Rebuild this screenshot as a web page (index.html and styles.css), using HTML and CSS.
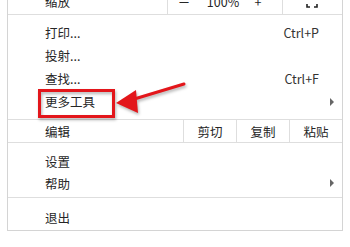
FILE: index.html
```html
<!DOCTYPE html>
<html lang="zh-CN">
<head>
    <meta charset="UTF-8">
    <title>菜单</title>
    <link rel="stylesheet" href="styles.css">
</head>
<body>
    <div class="menu">
        <div class="zoom-row">
            <span class="label">缩放</span>
            <div class="zoom-ctrl">
                <span>－</span>
                <span>100%</span>
                <span>+</span>
            </div>
            <div class="fullscreen">
                <svg width="12" height="12" viewBox="0 0 12 12">
                    <path d="M1 4V1h3M8 1h3v3M11 8v3H8M4 11H1V8" fill="none" stroke="#222" stroke-width="1.6"/>
                </svg>
            </div>
        </div>

        <div class="section first">
            <div class="item"><span class="label">打印...</span><span class="key">Ctrl+P</span><span class="sub"></span></div>
            <div class="item"><span class="label">投射...</span><span class="key"></span><span class="sub"></span></div>
            <div class="item"><span class="label">查找...</span><span class="key">Ctrl+F</span><span class="sub"></span></div>
            <div class="item"><span class="label">更多工具</span><span class="key"></span><span class="sub"><i class="arrow"></i></span></div>
        </div>

        <div class="edit-row">
            <span class="label">编辑</span>
            <span class="cell">剪切</span>
            <span class="cell">复制</span>
            <span class="cell">粘贴</span>
        </div>

        <div class="section second">
            <div class="item"><span class="label">设置</span><span class="key"></span><span class="sub"></span></div>
            <div class="item"><span class="label">帮助</span><span class="key"></span><span class="sub"><i class="arrow"></i></span></div>
        </div>

        <div class="section last">
            <div class="item"><span class="label">退出</span><span class="key"></span><span class="sub"></span></div>
        </div>
    </div>

    <!-- annotation drawn over the menu -->
    <svg class="annotation" width="350" height="247" viewBox="0 0 350 247">
        <rect x="39.5" y="90.5" width="74" height="26" fill="none" stroke="#e3161b" stroke-width="3"/>
        <line x1="131" y1="100" x2="184" y2="84" stroke="#e3161b" stroke-width="3" stroke-linecap="round"/>
        <polygon points="116,103 136,90 138,113" fill="#e3161b"/>
    </svg>
</body>
</html>
```

FILE: styles.css
```css
* {
    margin: 0;
    padding: 0;
    box-sizing: border-box;
}

body {
    background: #fff;
    font-family: "Noto Sans CJK SC", "Liberation Sans", sans-serif;
    font-size: 12.5px;
    color: #262626;
    width: 350px;
    height: 247px;
    overflow: hidden;
    position: relative;
}

.menu {
    width: 336px;
    margin: -11px 0 0 7px;
    border: 1px solid #d4d4d4;
    border-top: none;
    background: #fff;
}

.label {
    flex: 1;
    padding-left: 37px;
}

/* zoom row */
.zoom-row {
    display: flex;
    height: 26px;
    align-items: stretch;
    border-bottom: 1px solid #dedede;
}

.zoom-row .label {
    display: flex;
    align-items: center;
}

.zoom-ctrl {
    width: 115px;
    border-left: 1px solid #dedede;
    display: grid;
    grid-template-columns: 32px 46px 24px;
    align-items: center;
    text-align: center;
}

.fullscreen {
    width: 60px;
    border-left: 1px solid #dedede;
    display: flex;
    align-items: center;
    justify-content: center;
    padding-right: 2px;
}

/* plain sections */
.section.first {
    padding: 6px 0 6px;
}

.section.second {
    padding: 7px 0 3px;
}

.section.second .item {
    height: 22px;
}

.section.last {
    border-top: 1px solid #dedede;
    padding: 8px 0 1px;
}

.item {
    display: flex;
    align-items: center;
    height: 23px;
}

.key {
    color: #333;
}

.sub {
    width: 23px;
    display: flex;
    align-items: center;
    padding-left: 11px;
}

.arrow {
    width: 0;
    height: 0;
    border-top: 4px solid transparent;
    border-bottom: 4px solid transparent;
    border-left: 4px solid #666;
}

/* edit row */
.edit-row {
    display: flex;
    height: 24px;
    border-top: 1px solid #dedede;
    border-bottom: 1px solid #dedede;
    align-items: stretch;
}

.edit-row .label {
    display: flex;
    align-items: center;
}

.cell {
    width: 53px;
    border-left: 1px solid #dedede;
    display: flex;
    align-items: center;
    justify-content: center;
}

.cell:first-of-type {
    width: 54px;
}

.annotation {
    position: absolute;
    top: 0;
    left: 0;
    pointer-events: none;
    filter: drop-shadow(1px 2px 1.5px rgba(0, 0, 0, 0.3));
}
```
